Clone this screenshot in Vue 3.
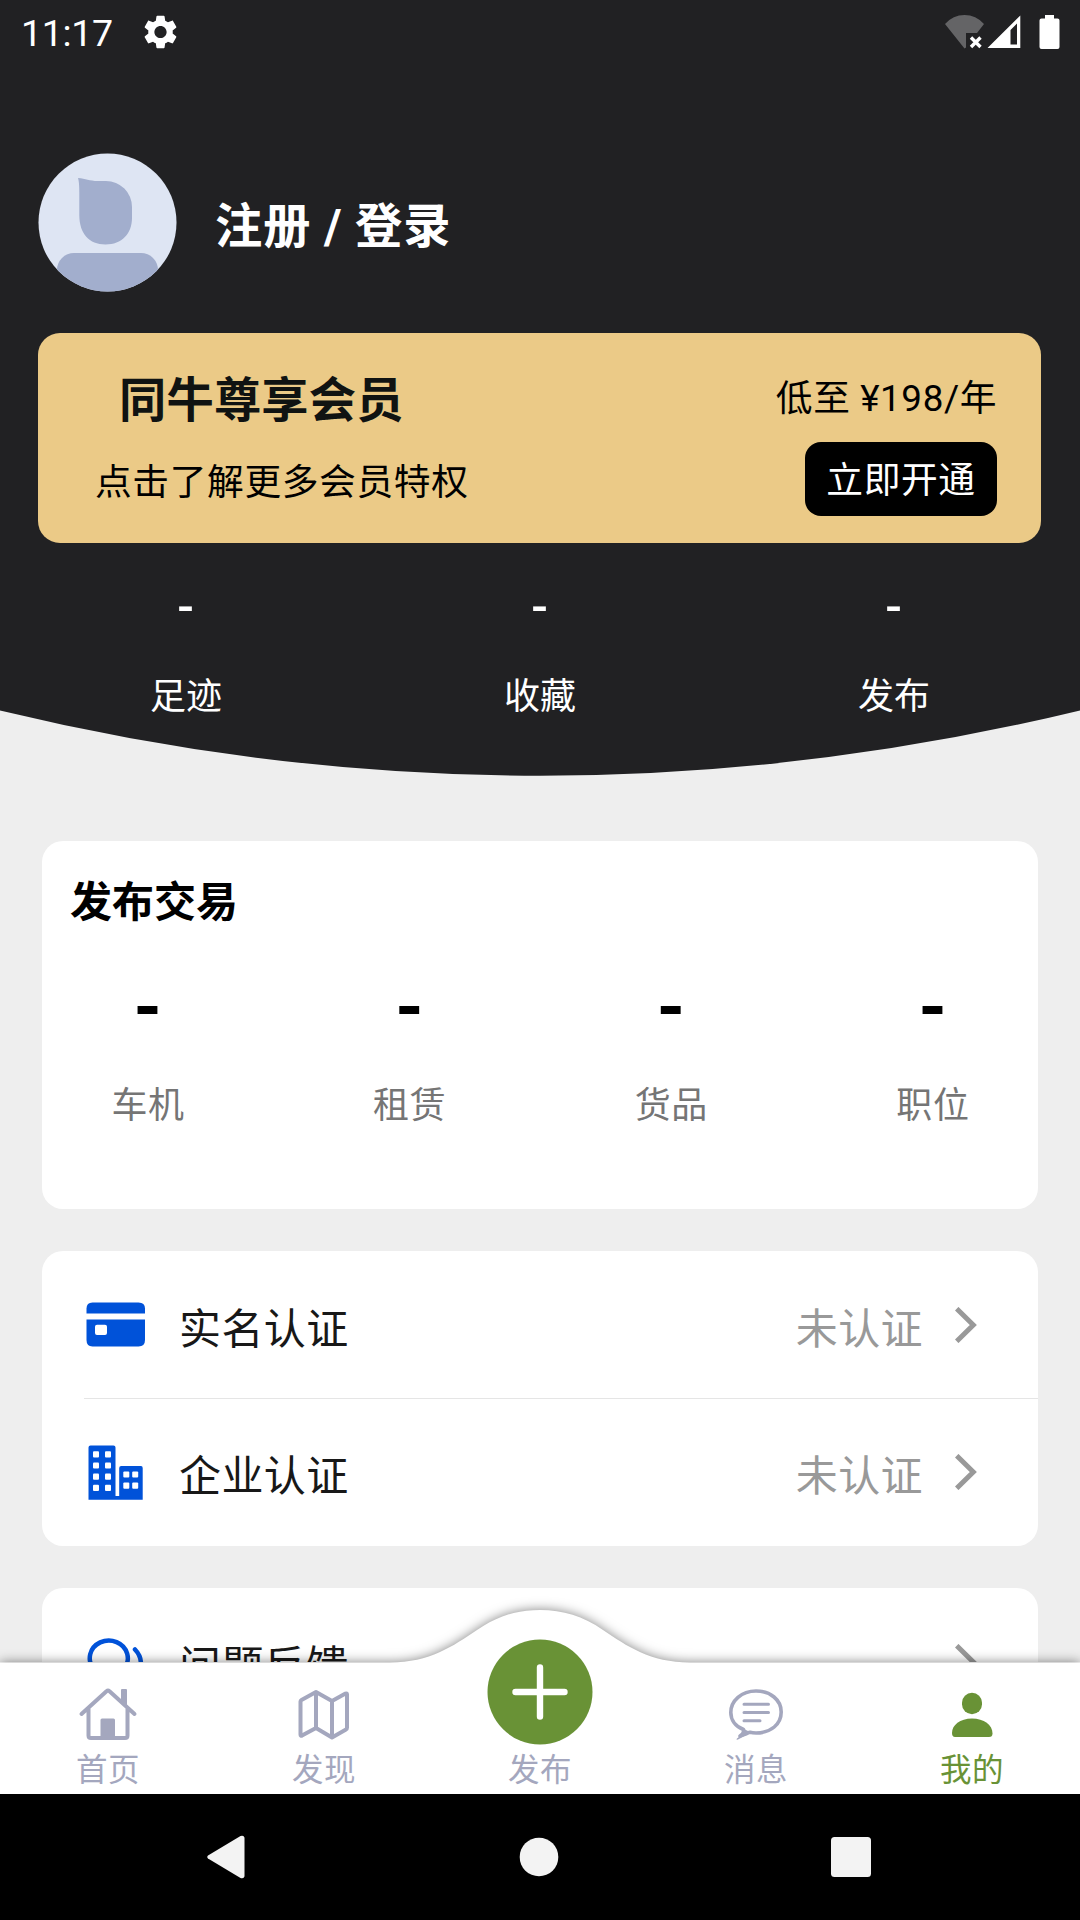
<script setup>
const stats = ['足迹', '收藏', '发布']
const trades = ['车机', '租赁', '货品', '职位']
</script>

<template>
  <div class="screen">
    <main class="page">
      <header class="hero">
        <div class="status">
          <span class="clock">11:17</span>
          <svg class="gear" width="33" height="34" viewBox="2.3 2 19.4 20" preserveAspectRatio="none">
            <path fill="#fff" d="M19.14 12.94c.04-.3.06-.61.06-.94 0-.32-.02-.64-.07-.94l2.03-1.58c.18-.14.23-.41.12-.61l-1.92-3.32c-.12-.22-.37-.29-.59-.22l-2.39.96c-.5-.38-1.03-.7-1.62-.94l-.36-2.54c-.04-.24-.24-.41-.48-.41h-3.84c-.24 0-.43.17-.47.41l-.36 2.54c-.59.24-1.13.57-1.62.94l-2.39-.96c-.22-.08-.47 0-.59.22L2.74 8.87c-.12.21-.08.47.12.61l2.03 1.58c-.05.3-.09.63-.09.94s.02.64.07.94l-2.03 1.58c-.18.14-.23.41-.12.61l1.92 3.32c.12.22.37.29.59.22l2.39-.96c.5.38 1.03.7 1.62.94l.36 2.54c.05.24.24.41.48.41h3.84c.24 0 .44-.17.47-.41l.36-2.54c.59-.24 1.13-.56 1.62-.94l2.39.96c.22.08.47 0 .59-.22l1.92-3.32c.12-.22.07-.47-.12-.61l-2.01-1.58zM12 15.6c-1.98 0-3.6-1.62-3.6-3.6s1.62-3.6 3.6-3.6 3.6 1.62 3.6 3.6-1.62 3.6-3.6 3.6z" />
          </svg>
          <svg class="signals" width="115" height="34" viewBox="0 0 115 34">
            <path fill="#646466" d="M0 9Q8 0 19.500 0T39 9L32 18H21V32.500L19.500 33.500Z" />
            <path stroke="#fff" stroke-width="3.400" fill="none" d="M26 22.500L35.500 32M35.500 22.500L26 32" />
            <path fill="#fff" fill-rule="evenodd" d="M75.300.5V33H42.500ZM72 8.500L65.500 15V29.500H72Z" />
            <path fill="#fff" d="M100 0H109V3.500H112.500Q114.500 3.500 114.500 5.500V32Q114.500 34 112.500 34H96.500Q94.500 34 94.500 32V5.500Q94.500 3.500 96.500 3.500H100Z" />
          </svg>
        </div>

        <div class="user">
          <svg class="avatar" width="139" height="139" viewBox="0 0 139 139">
            <defs><clipPath id="face"><circle cx="69.500" cy="69.500" r="69" /></clipPath></defs>
            <g clip-path="url(#face)">
              <rect width="139" height="139" fill="#dee5f3" />
              <path fill="#a2aecd" d="M40 25C48 25.500 51 28 60 28H68A26 26 0 0 1 94 54V65C94 80.500 84 91.500 67.500 91.500S41.500 80.500 41.300 62.500V40.500C41.300 32.500 41 28.500 40 25Z" />
              <rect x="19" y="100" width="101" height="60" rx="17" fill="#a2aecd" />
            </g>
          </svg>
          <span class="login">注册 / 登录</span>
        </div>

        <section class="vip">
          <div class="vip-left">
            <div class="vip-title">同牛尊享会员</div>
            <div class="vip-sub">点击了解更多会员特权</div>
          </div>
          <div class="vip-right">
            <div class="price">低至 ¥198/年</div>
            <div class="open">立即开通</div>
          </div>
        </section>

        <div class="stats">
          <div v-for="s in stats" :key="s" class="stat">
            <div class="stat-num">-</div>
            <div class="stat-label">{{ s }}</div>
          </div>
        </div>
      </header>

      <section class="card trade">
        <h2>发布交易</h2>
        <div class="trade-row">
          <div v-for="t in trades" :key="t" class="trade-item">
            <div class="trade-num">-</div>
            <div class="trade-label">{{ t }}</div>
          </div>
        </div>
      </section>

      <section class="card">
        <div class="row">
          <svg width="63" height="63" viewBox="0 0 63 63" fill="#0052d9">
            <path d="M2.500 20.500V15.500Q2.500 9.500 8.500 9.500H54.500Q61 9.500 61 15.500V20.500Z" />
            <path fill-rule="evenodd" d="M2.500 26.500H61V47Q61 53.500 54.500 53.500H8.500Q2.500 53.500 2.500 47ZM13 31.800Q11 31.800 11 33.800V40Q11 42 13 42H21Q23 42 23 40V33.800Q23 31.800 21 31.800Z" />
          </svg>
          <span class="name">实名认证</span>
          <span class="state">未认证</span>
          <svg class="chev" width="22" height="36" viewBox="0 0 22 36"><path d="M1.700 1.700L18.300 18L1.700 34.300" /></svg>
        </div>
        <div class="row lined">
          <svg width="63" height="63" viewBox="0 0 63 63">
            <path fill="#0052d9" d="M4.500 6.500Q4.500 4.500 6.500 4.500H29.500Q31.500 4.500 31.500 6.500V55H35.200V27Q35.200 25 37.200 25H57Q58.700 25 58.700 27V58.700H4.500Z" />
            <g fill="#fff">
              <rect v-for="n in 4" :key="'a' + n" x="9" :y="-1 + n * 11.200" width="6" height="6.200" rx="1" />
              <rect v-for="n in 4" :key="'b' + n" x="21" :y="-1 + n * 11.200" width="6" height="6.200" rx="1" />
              <rect v-for="n in 2" :key="'c' + n" x="39.300" :y="19.200 + n * 11.200" width="6" height="6.200" rx="1" />
              <rect v-for="n in 2" :key="'d' + n" x="48.200" :y="19.200 + n * 11.200" width="6" height="6.200" rx="1" />
            </g>
          </svg>
          <span class="name">企业认证</span>
          <span class="state">未认证</span>
          <svg class="chev" width="22" height="36" viewBox="0 0 22 36"><path d="M1.700 1.700L18.300 18L1.700 34.300" /></svg>
        </div>
      </section>

      <section class="card">
        <div class="row">
          <svg width="63" height="63" viewBox="0 0 63 63" fill="none" stroke="#0052d9" stroke-width="4.500" stroke-linecap="round">
            <path d="M10 39A19 17.500 0 1 1 25.700 45.500L12 48Z" />
            <path d="M51 19.500Q61 30 54 44" />
          </svg>
          <span class="name">问题反馈</span>
          <svg class="chev" width="22" height="36" viewBox="0 0 22 36"><path d="M1.700 1.700L18.300 18L1.700 34.300" /></svg>
        </div>
      </section>
    </main>

    <nav class="tabs">
      <svg class="tabs-bg" width="1080" height="212" viewBox="0 0 1080 212">
        <path fill="#fff" d="M0 80.500H390C430 80.500 453 64 477 48C497 34 517 28 540 28S583 34 603 48C627 64 650 80.500 690 80.500H1080V212H0Z" />
      </svg>
      <div class="tab">
        <svg width="60" height="54" viewBox="0 0 60 54" fill="none" stroke="#a4a7be" stroke-width="4" stroke-linecap="round" stroke-linejoin="round">
          <path d="M3.500 27L28.500 4.200Q30 3 31.500 4.200L56.500 27M10.500 22V48.500Q10.500 51 13 51H47Q49.500 51 49.500 48.500V22" />
          <path fill="#a4a7be" stroke="none" d="M43 3Q43 2 44 2H48Q49 2 49 3V20L43 14.500ZM22.500 33Q22.500 31.500 24 31.500H35.500Q37 31.500 37 33V51H22.500Z" />
        </svg>
        <span>首页</span>
      </div>
      <div class="tab">
        <svg width="60" height="54" viewBox="0 0 60 54" fill="none" stroke="#a4a7be" stroke-width="4" stroke-linejoin="round">
          <path d="M6.500 14.500Q6.500 13.500 7.500 12.900L22 5L38 14L51.500 6.600Q53 6 53 7.500V40.500Q53 42 52 42.500L38 50.500L22 41L8 48.600Q6.500 49.300 6.500 47.500ZM22 5V41M38 14V50.500" />
        </svg>
        <span>发现</span>
      </div>
      <div class="tab">
        <svg class="plus" width="106" height="106" viewBox="0 0 106 106">
          <circle cx="53" cy="53" r="52.500" fill="#699236" />
          <path d="M28.500 53H77.500M53 28.500V77.500" stroke="#fff" stroke-width="6.400" stroke-linecap="round" />
        </svg>
        <span>发布</span>
      </div>
      <div class="tab">
        <svg width="60" height="54" viewBox="0 0 60 54" fill="none" stroke="#a4a7be" stroke-width="3.600">
          <path stroke-linejoin="round" d="M17.500 42.500C8.500 39 4.800 32 4.800 25.500C4.800 14 15.500 4 30 4S55.200 13 55.200 25S45 46 30 46Q26.500 46 24 45.300Q20 46 14 49Q18.500 46 17.500 42.500Z" />
          <path fill="#a4a7be" stroke="none" d="M15.500 41L20 43L24 45L22 48Q16 50 12 52.500Q9.500 53 11 51.500Q16 48 16 44.500Z" />
          <path stroke-width="3" stroke-linecap="round" d="M18 17.200H42.500M18 25.500H42.500M18 33.700H34" />
        </svg>
        <span>消息</span>
      </div>
      <div class="tab active">
        <svg width="60" height="54" viewBox="0 0 60 54" fill="#699236">
          <rect x="20" y="5.800" width="20" height="21.500" rx="10" />
          <path d="M10 46C10 38 18 31.500 30 31.500S50.500 38 50.500 46.500Q50.500 50 47 50H13Q10 50 10 46Z" />
        </svg>
        <span>我的</span>
      </div>
    </nav>

    <footer class="sysnav">
      <svg width="38" height="44" viewBox="0 0 38 44"><path fill="#f3f3f3" d="M1 20.500L33.500 1Q37.500 0 37.500 3.500V40.500Q37.500 44 33.500 43L1 23.500Q-.5 22 1 20.500Z" /></svg>
      <svg class="home" width="40" height="40" viewBox="0 0 40 40"><circle cx="20" cy="20" r="19.300" fill="#f3f3f3" /></svg>
      <svg width="40" height="40" viewBox="0 0 40 40"><rect width="40" height="40" rx="3.500" fill="#f3f3f3" /></svg>
    </footer>
  </div>
</template>

<style>
body {
  margin: 0;
}
</style>

<style scoped>
.screen {
  width: 1080px;
  height: 1920px;
  overflow: hidden;
  display: flex;
  flex-direction: column;
  background: #eee;
  font-family: Roboto, "Noto Sans CJK SC", sans-serif;
  font-size: 36.75px;
  letter-spacing: 0.6px;
}
svg {
  display: block;
  flex: none;
}
.page {
  height: 1662px;
  flex: none;
  overflow: hidden;
}
.hero {
  height: 776px;
  background: #212123;
  color: #fff;
  clip-path: path("M0 0H1080V710.500Q540 841 0 710.500Z");
}
.status {
  height: 63px;
  display: flex;
  align-items: center;
  padding: 0 20px 0 21px;
}
.clock {
  font-size: 37.500px;
  letter-spacing: -0.3px;
  line-height: 63px;
  margin-top: 3px;
}
.gear {
  margin-left: 31px;
}
.signals {
  margin-left: auto;
}
.user {
  margin: 90px 0 0 38px;
  display: flex;
  align-items: center;
  gap: 38px;
}
.login {
  font-size: 47.250px;
  font-weight: 700;
  letter-spacing: 0.9px;
  line-height: 60px;
  margin-top: 8px;
}
.vip {
  margin: 41px 39px 0 38px;
  height: 210px;
  box-sizing: border-box;
  border-radius: 22px;
  background: #ebca87;
  color: #000;
  display: flex;
  justify-content: space-between;
  padding: 38px 44px 0 57px;
}
.vip-title {
  font-size: 47.250px;
  font-weight: 700;
  letter-spacing: 0.2px;
  color: #101312;
  line-height: 60px;
  padding-left: 24px;
}
.vip-sub {
  line-height: 50px;
  margin-top: 27px;
}
.vip-right {
  display: flex;
  flex-direction: column;
  align-items: flex-end;
}
.price {
  line-height: 50px;
  margin-top: 3px;
}
.open {
  width: 192px;
  height: 74px;
  margin-top: 18px;
  border-radius: 16px;
  background: #000;
  color: #fff;
  line-height: 78px;
  text-align: center;
}
.stats {
  display: flex;
  padding: 34px 9px 0;
}
.stat {
  flex: 1;
  text-align: center;
}
.stat-num {
  font-size: 49px;
  line-height: 60px;
  font-weight: 500;
}
.stat-label {
  font-size: 36px;
  letter-spacing: 0;
  line-height: 50px;
  margin-top: 35px;
}
.card {
  margin: 0 42px 42px;
  border-radius: 21px;
  background: #fff;
}
.trade {
  height: 368px;
  margin-top: 65px;
  box-sizing: border-box;
  padding-top: 33px;
}
h2 {
  margin: 0;
  padding-left: 28px;
  font-size: 42px;
  letter-spacing: 0;
  font-weight: 700;
  line-height: 58px;
}
.trade-row {
  display: flex;
  justify-content: space-between;
  padding: 41px 65px 0 66px;
}
.trade-item {
  width: 80px;
  text-align: center;
}
.trade-num {
  font-size: 72px;
  font-weight: 700;
  line-height: 70px;
}
.trade-label {
  color: #757575;
  font-size: 36px;
  white-space: nowrap;
  line-height: 50px;
  margin-top: 38px;
}
.row {
  height: 147.500px;
  display: flex;
  align-items: center;
  padding: 0 61px 0 42px;
  font-size: 42px;
  position: relative;
}
.lined::before {
  content: "";
  position: absolute;
  left: 42px;
  right: 0;
  top: -1px;
  height: 1px;
  background: #e5e5e5;
}
.name {
  color: #181818;
  margin: 1px 0 0 32px;
  letter-spacing: 0.4px;
}
.state {
  color: #999;
  margin: 1px 32px 0 auto;
  letter-spacing: 0.4px;
}
.chev {
  margin-left: auto;
}
.state + .chev {
  margin-left: 0;
}
.chev path {
  fill: none;
  stroke: #999;
  stroke-width: 5;
}
.tabs {
  height: 132px;
  flex: none;
  display: flex;
  position: relative;
}
.tabs-bg {
  position: absolute;
  left: 0;
  bottom: 0;
  filter: drop-shadow(0 0 6px rgba(0, 0, 0, 0.5));
}
.tab {
  position: relative;
  flex: 1;
  display: flex;
  flex-direction: column;
  align-items: center;
  justify-content: flex-end;
  color: #a4a7be;
  font-size: 31.500px;
  letter-spacing: 0.5px;
}
.tab > span {
  line-height: 40px;
  margin: 10px 0 3px;
}
.tab .plus {
  margin-bottom: -4px;
}
.active {
  color: #699236;
}
.sysnav {
  position: relative;
  flex: 1;
  background: #000;
  display: flex;
  align-items: center;
  justify-content: space-between;
  padding: 0 209px 0 207px;
}
.home {
  margin-left: 2px;
}
</style>
